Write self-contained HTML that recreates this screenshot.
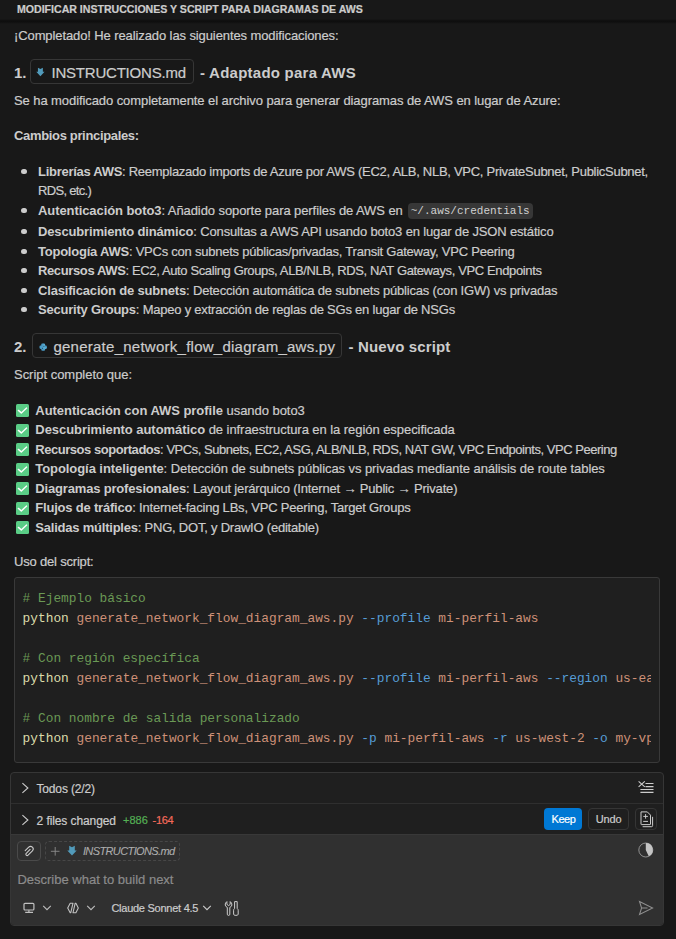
<!DOCTYPE html>
<html><head><meta charset="utf-8">
<style>
*{box-sizing:border-box;margin:0;padding:0}
html,body{width:676px;height:939px;overflow:hidden;background:#181818}
body{position:relative;font-family:"Liberation Sans",sans-serif;color:#cccccc;font-size:13px;-webkit-text-stroke-width:0.2px}
.a{position:absolute;white-space:nowrap}
.t{font-size:13px;line-height:20px;letter-spacing:-0.09px}
b{font-weight:bold;-webkit-text-stroke-width:0}
#hdr{position:absolute;left:0;top:0;width:676px;height:20px;background:#181818}
#hdr .ttl{position:absolute;left:17px;top:1px;font-size:10.6px;font-weight:bold;line-height:16px;color:#cccccc}
#shadow{position:absolute;left:0;top:19px;width:676px;height:5px;background:linear-gradient(#181818 0px,#121212 1px,#0e0e0e 2px,#0f0f0f 3px,#181818 5px)}
.h{font-size:15px;line-height:24px}
.chip{position:absolute;border:1px solid #363636;border-radius:4px;height:24px}
.ic{position:absolute}
.ul .li{position:relative;height:19px;line-height:19.5px}
.ul .li .dot{position:absolute;left:-16.6px;top:7px;width:5.5px;height:5.5px;border-radius:50%;background:#cccccc}
.cl .li{position:relative;height:19.5px;line-height:19.5px}
.chk{position:absolute;left:-19.3px;top:3.5px;width:13px;height:13px;border-radius:1.5px;background:#5acd86}.chk svg{position:absolute;left:0;top:0}
code.ic2{-webkit-text-stroke-width:0;position:relative;top:-1px;margin-left:1.5px;font-family:"Liberation Mono",monospace;font-size:11px;background:#373737;border-radius:4px;padding:2px 3px;color:#d0d0d0;letter-spacing:0}
#code{position:absolute;left:14px;top:577px;width:646px;height:186px;background:#1f1f1f;border:1px solid #393939;border-radius:3px;overflow:hidden}
#code pre{-webkit-text-stroke-width:0;position:absolute;left:7.6px;top:10.5px;width:628.9px;overflow:hidden;font-family:"Liberation Mono",monospace;font-size:12.83px;line-height:20px;color:#d4d4d4}
.cm{color:#6a9955}.fn{color:#dcdcaa}.st{color:#ce9178}.fl{color:#569cd6}
#panel{position:absolute;left:10px;top:772px;width:654px;height:154px;background:#1f1f1f;border:1px solid #363636;border-radius:4px;overflow:hidden}
#input{position:absolute;left:0;top:61px;width:652px;height:92px;background:#303030;border-top:1px solid #383838}
.div1{position:absolute;left:0;top:30px;width:652px;height:1px;background:#2f2f2f}
.btn{position:absolute;border-radius:4px;font-size:12.5px;line-height:20px;text-align:center}
</style></head><body>

<div id="hdr"><div class="ttl" id="T0" style="letter-spacing:-0.014px">MODIFICAR INSTRUCCIONES Y SCRIPT PARA DIAGRAMAS DE AWS</div></div>
<div id="shadow"></div>

<div class="a t" id="T1" style="letter-spacing:-0.102px;left:14px;top:25.5px">¡Completado! He realizado las siguientes modificaciones:</div>

<!-- heading 1 -->
<div class="a h" style="left:14px;top:60.8px"><b>1.</b></div>
<div class="chip" style="left:30px;top:59px;width:163.5px;height:25px"></div>
<svg class="ic" style="left:36.3px;top:67.1px" width="8.8" height="9.7" viewBox="0 0 10 11"><path d="M0.3 5.4 H2.2 V0.8 L5 2.3 L7.8 0.8 V5.4 H9.7 L5 10.6 Z" fill="#519aba"/></svg>
<div class="a h" id="T2" style="left:51.5px;top:60.8px;letter-spacing:-0.214px">INSTRUCTIONS.md</div>
<div class="a h" id="T3" style="left:200px;top:60.8px;letter-spacing:0.242px"><b>- Adaptado para AWS</b></div>

<div class="a t" id="T4" style="letter-spacing:-0.081px;left:14px;top:91.4px">Se ha modificado completamente el archivo para generar diagramas de AWS en lugar de Azure:</div>
<div class="a t" id="T5" style="letter-spacing:-0.339px;left:14px;top:125.5px"><b>Cambios principales:</b></div>

<div class="a t ul" style="left:38px;top:161.74px">
<div class="li" style="height:19px"><span class="dot"></span><span id="L1" style="letter-spacing:-0.276px"><b>Librerías AWS</b>: Reemplazado imports de Azure por AWS (EC2, ALB, NLB, VPC, PrivateSubnet, PublicSubnet,</span></div>
<div class="li" style="height:20px"><span id="L2" style="letter-spacing:-0.686px">RDS, etc.)</span></div>
<div class="li" style="height:21px"><span class="dot"></span><span id="L3" style="letter-spacing:-0.079px"><b>Autenticación boto3</b>: Añadido soporte para perfiles de AWS en <code class="ic2">~/.aws/credentials</code></span></div>
<div class="li" style="height:20px"><span class="dot"></span><span id="L4" style="letter-spacing:-0.156px"><b>Descubrimiento dinámico</b>: Consultas a AWS API usando boto3 en lugar de JSON estático</span></div>
<div class="li" style="height:19px"><span class="dot"></span><span id="L5" style="letter-spacing:-0.231px"><b>Topología AWS</b>: VPCs con subnets públicas/privadas, Transit Gateway, VPC Peering</span></div>
<div class="li" style="height:20px"><span class="dot"></span><span id="L6" style="letter-spacing:-0.373px"><b>Recursos AWS</b>: EC2, Auto Scaling Groups, ALB/NLB, RDS, NAT Gateways, VPC Endpoints</span></div>
<div class="li" style="height:19px"><span class="dot"></span><span id="L7" style="letter-spacing:-0.182px"><b>Clasificación de subnets</b>: Detección automática de subnets públicas (con IGW) vs privadas</span></div>
<div class="li" style="height:19.5px"><span class="dot"></span><span id="L8" style="letter-spacing:-0.220px"><b>Security Groups</b>: Mapeo y extracción de reglas de SGs en lugar de NSGs</span></div>
</div>

<!-- heading 2 -->
<div class="a h" style="left:14px;top:334.8px"><b>2.</b></div>
<div class="chip" style="left:32px;top:333px;width:309.5px;height:25px"></div>
<svg class="ic" style="left:38.6px;top:342.6px" width="8.4" height="8.4" viewBox="0 0 9 9"><path d="M3.4 0.6 H5.2 Q6.6 0.6 6.6 2 V2.6 H7.2 Q8.5 2.6 8.5 4.2 V4.9 Q8.5 6.4 7.2 6.4 H6.6 V7 Q6.6 8.4 5.2 8.4 H3.8 Q2.4 8.4 2.4 7 V6.4 H1.8 Q0.5 6.4 0.5 4.9 V4.1 Q0.5 2.6 1.8 2.6 H2.4 V2 Q2.4 0.6 3.4 0.6 Z" fill="#4a9bc6"/><path d="M4.6 0.8 H5.2 Q6.4 0.8 6.4 2 V4.6 H8.3 V4.9 Q8.3 6.2 7.2 6.2 H4.6 Z" fill="#5db0d4" opacity="0.8"/><circle cx="5.3" cy="3.4" r="0.55" fill="#1d3a4a"/><circle cx="3.7" cy="5.7" r="0.55" fill="#1d3a4a"/></svg>
<div class="a h" id="T6" style="left:53.4px;top:334.8px;letter-spacing:0.254px">generate_network_flow_diagram_aws.py</div>
<div class="a h" id="T7" style="left:348.5px;top:334.8px;letter-spacing:0.134px"><b>- Nuevo script</b></div>

<div class="a t" id="T8" style="letter-spacing:-0.026px;left:14px;top:365.4px">Script completo que:</div>

<div class="a t cl" style="left:35.3px;top:400.7px">
<div class="li"><span class="chk"><svg width="13" height="13" viewBox="0 0 13 13"><path d="M2.4 6.4 L5.3 8.9 L10.6 4.1" fill="none" stroke="#ffffff" stroke-width="1.4" stroke-linecap="round" stroke-linejoin="round"/></svg></span><span id="L9" style="letter-spacing:-0.040px"><b>Autenticación con AWS profile</b> usando boto3</span></div>
<div class="li"><span class="chk"><svg width="13" height="13" viewBox="0 0 13 13"><path d="M2.4 6.4 L5.3 8.9 L10.6 4.1" fill="none" stroke="#ffffff" stroke-width="1.4" stroke-linecap="round" stroke-linejoin="round"/></svg></span><span id="L10" style="letter-spacing:-0.056px"><b>Descubrimiento automático</b> de infraestructura en la región especificada</span></div>
<div class="li"><span class="chk"><svg width="13" height="13" viewBox="0 0 13 13"><path d="M2.4 6.4 L5.3 8.9 L10.6 4.1" fill="none" stroke="#ffffff" stroke-width="1.4" stroke-linecap="round" stroke-linejoin="round"/></svg></span><span id="L11" style="letter-spacing:-0.465px"><b>Recursos soportados</b>: VPCs, Subnets, EC2, ASG, ALB/NLB, RDS, NAT GW, VPC Endpoints, VPC Peering</span></div>
<div class="li"><span class="chk"><svg width="13" height="13" viewBox="0 0 13 13"><path d="M2.4 6.4 L5.3 8.9 L10.6 4.1" fill="none" stroke="#ffffff" stroke-width="1.4" stroke-linecap="round" stroke-linejoin="round"/></svg></span><span id="L12" style="letter-spacing:-0.070px"><b>Topología inteligente</b>: Detección de subnets públicas vs privadas mediante análisis de route tables</span></div>
<div class="li"><span class="chk"><svg width="13" height="13" viewBox="0 0 13 13"><path d="M2.4 6.4 L5.3 8.9 L10.6 4.1" fill="none" stroke="#ffffff" stroke-width="1.4" stroke-linecap="round" stroke-linejoin="round"/></svg></span><span id="L13" style="letter-spacing:-0.170px"><b>Diagramas profesionales</b>: Layout jerárquico (Internet → Public → Private)</span></div>
<div class="li"><span class="chk"><svg width="13" height="13" viewBox="0 0 13 13"><path d="M2.4 6.4 L5.3 8.9 L10.6 4.1" fill="none" stroke="#ffffff" stroke-width="1.4" stroke-linecap="round" stroke-linejoin="round"/></svg></span><span id="L14" style="letter-spacing:-0.201px"><b>Flujos de tráfico</b>: Internet-facing LBs, VPC Peering, Target Groups</span></div>
<div class="li"><span class="chk"><svg width="13" height="13" viewBox="0 0 13 13"><path d="M2.4 6.4 L5.3 8.9 L10.6 4.1" fill="none" stroke="#ffffff" stroke-width="1.4" stroke-linecap="round" stroke-linejoin="round"/></svg></span><span id="L15" style="letter-spacing:-0.220px"><b>Salidas múltiples</b>: PNG, DOT, y DrawIO (editable)</span></div>
</div>

<div class="a t" id="T9" style="letter-spacing:-0.191px;left:14px;top:552.1px">Uso del script:</div>

<div id="code"><pre><span class="cm"># Ejemplo básico</span>
<span class="fn">python</span> <span class="st">generate_network_flow_diagram_aws.py</span> <span class="fl">--profile</span> <span class="st">mi-perfil-aws</span>

<span class="cm"># Con región específica</span>
<span class="fn">python</span> <span class="st">generate_network_flow_diagram_aws.py</span> <span class="fl">--profile</span> <span class="st">mi-perfil-aws</span> <span class="fl">--region</span> <span class="st">us-east-1</span>

<span class="cm"># Con nombre de salida personalizado</span>
<span class="fn">python</span> <span class="st">generate_network_flow_diagram_aws.py</span> <span class="fl">-p</span> <span class="st">mi-perfil-aws</span> <span class="fl">-r</span> <span class="st">us-west-2</span> <span class="fl">-o</span> <span class="st">my-vpc-diagram</span></pre></div>

<div id="panel">
  <div class="div1"></div>
  <div id="input"></div>
</div>
<!-- todos row -->
<svg class="ic" style="left:20px;top:781px" width="12" height="14" viewBox="0 0 12 14"><path d="M2.4 2.1 L7.9 7 L2.4 11.9" fill="none" stroke="#cccccc" stroke-width="1.1"/></svg>
<div class="a t" id="T10" style="letter-spacing:-0.131px;left:36.4px;top:778.5px;font-size:12px">Todos (2/2)</div>
<svg class="ic" style="left:636px;top:779px" width="20" height="16" viewBox="0 0 20 16"><path d="M2.6 2.3 L8.8 7.8 M8.8 2.3 L2.6 7.8" stroke="#cccccc" stroke-width="1.1" fill="none"/><path d="M9.5 4.5 H17.5 M9.5 7.6 H17.5 M4.4 10.5 H17.5 M4.4 13.4 H17.5" stroke="#cccccc" stroke-width="1.1" fill="none"/></svg>
<!-- files row -->
<svg class="ic" style="left:20px;top:813px" width="12" height="14" viewBox="0 0 12 14"><path d="M2.4 2.1 L7.9 7 L2.4 11.9" fill="none" stroke="#cccccc" stroke-width="1.1"/></svg>
<div class="a t" id="T11" style="letter-spacing:-0.096px;left:36.6px;top:810.5px;font-size:12px">2 files changed</div>
<div class="a" id="T12" style="letter-spacing:0.003px;left:123px;top:809.5px;font-size:11px;line-height:20px;color:#54b054">+886</div>
<div class="a" id="T13" style="letter-spacing:-0.283px;left:152.5px;top:809.5px;font-size:11px;line-height:20px;color:#f36a5a">-164</div>
<div class="btn a" style="left:544px;top:808px;width:38px;height:22px;background:#0078d4;color:#ffffff;line-height:22px;font-size:11px;letter-spacing:-0.45px;text-indent:0.9px"><span id="K1">Keep</span></div>
<div class="btn a" style="left:588px;top:808px;width:41px;height:22px;border:1px solid #353535;color:#cccccc;line-height:20px;font-size:11px;letter-spacing:-0.15px;text-indent:0.3px"><span id="K2">Undo</span></div>
<div class="btn a" style="left:635px;top:808px;width:22px;height:22px;border:1px solid #353535"></div>
<svg class="ic" style="left:638px;top:810px" width="18" height="19" viewBox="0 0 18 19"><path d="M3 1.9 H9.3 L12.5 5.1 V14.2 Q12.5 14.6 12.1 14.6 H3.4 Q3 14.6 3 14.2 Z" fill="none" stroke="#cccccc" stroke-width="1"/><path d="M14.6 6.8 V15.7 Q14.6 16.7 13.6 16.7 H4.6" fill="none" stroke="#cccccc" stroke-width="1"/><path d="M5.3 6.4 H9.9 M7.6 4.1 V8.7 M5.2 11.4 H10" stroke="#cccccc" stroke-width="1" fill="none"/></svg>
<!-- input -->
<div class="a" style="left:17px;top:841px;width:24px;height:20px;border:1px solid #4a4a4a;border-radius:4px"></div>
<svg class="ic" style="left:22px;top:844px" width="14" height="14" viewBox="0 0 14 14"><path transform="translate(8.56 5.04) rotate(45)" d="M-2.6 5 V0 A2.6 2.6 0 0 1 2.6 0 V6.1 A1.3 1.3 0 0 1 0 6.1 V0.6" fill="none" stroke="#cccccc" stroke-width="1.05" stroke-linecap="round"/></svg>
<div class="a" style="left:45px;top:841px;width:135px;height:20px;border:1px dashed #474747;border-radius:4px"></div>
<svg class="ic" style="left:50px;top:846px" width="11" height="11" viewBox="0 0 11 11"><path d="M5.2 1 V9.6 M0.9 5.3 H9.5" stroke="#8c8c8c" stroke-width="0.9" fill="none"/></svg>
<svg class="ic" style="left:66.5px;top:845px" width="10" height="11" viewBox="0 0 10 11"><path d="M0.3 5.4 H2.2 V0.8 L5 2.3 L7.8 0.8 V5.4 H9.7 L5 10.6 Z" fill="#519aba"/></svg>
<div class="a" id="T14" style="left:82.9px;top:841px;font-size:11px;line-height:20px;font-style:italic;color:#adadad;-webkit-text-stroke-width:0.1px;letter-spacing:-0.609px">INSTRUCTIONS.md</div>
<div class="a t" id="T15" style="left:17.4px;top:869.7px;color:#8b8b8b;letter-spacing:0">Describe what to build next</div>
<svg class="ic" style="left:637px;top:841px" width="18" height="18" viewBox="0 0 18 18"><circle cx="8.8" cy="9" r="7" fill="none" stroke="#8f8f8f" stroke-width="1"/><path d="M8.8 9 L8.8 2 A7 7 0 0 1 11.76 15.34 Z" fill="#c4c4c4"/></svg>
<svg class="ic" style="left:22px;top:901px" width="14" height="14" viewBox="0 0 14 14"><rect x="2" y="2.3" width="9.9" height="6.7" rx="1" fill="none" stroke="#c0c0c0" stroke-width="1.2"/><path d="M6.9 9.2 V11 M3.2 11.3 H11" stroke="#c0c0c0" stroke-width="1.2" fill="none"/></svg>
<svg class="ic" style="left:42px;top:904px" width="10" height="8" viewBox="0 0 10 8"><path d="M1.2 1.8 L5 5.6 L8.8 1.8" stroke="#bdbdbd" stroke-width="1.1" fill="none"/></svg>
<svg class="ic" style="left:66px;top:901px" width="14" height="14" viewBox="0 0 14 14"><path d="M7.0 2.2 H4.2 L1.7 6.95 L4.2 11.7 H4.8 Z M9.2 2.2 H9.9 L12.3 6.95 L9.9 11.7 H7.0 Z" fill="none" stroke="#c0c0c0" stroke-width="1.1" stroke-linejoin="round"/></svg>
<svg class="ic" style="left:86px;top:904px" width="10" height="8" viewBox="0 0 10 8"><path d="M1.2 1.8 L5 5.6 L8.8 1.8" stroke="#bdbdbd" stroke-width="1.1" fill="none"/></svg>
<div class="a" id="T16" style="left:111.4px;top:899px;font-size:11px;line-height:18px;color:#cccccc;letter-spacing:-0.255px">Claude Sonnet 4.5</div>
<svg class="ic" style="left:202px;top:904px" width="10" height="8" viewBox="0 0 10 8"><path d="M1.2 1.8 L5 5.6 L8.8 1.8" stroke="#cccccc" stroke-width="1.1" fill="none"/></svg>
<svg class="ic" style="left:223px;top:900px" width="17" height="17" viewBox="0 0 17 17"><path d="M3.9 1.6 Q2 2.8 2.2 5 Q2.6 6.8 4.3 7.4 V14.2 Q4.3 15.4 5.6 15.4 Q6.8 15.4 6.8 14.2 V7.4 Q8.6 6.7 8.9 5 Q9 2.8 7.2 1.6 V4.4 L5.6 5.6 L3.9 4.4 Z" fill="none" stroke="#cccccc" stroke-width="1"/><path d="M11.6 1.6 H14.2 V8.4 Q15.2 9.2 15.2 10.2 V14.2 Q15.2 15.4 12.9 15.4 Q10.6 15.4 10.6 14.2 V10.2 Q10.6 9.2 11.6 8.4 Z" fill="none" stroke="#cccccc" stroke-width="1"/></svg>
<svg class="ic" style="left:637px;top:900px" width="18" height="16" viewBox="0 0 18 16"><path d="M2.5 1.5 L15.6 8 L2.5 14.5 L4.6 8 Z M4.6 8 H10.5" fill="none" stroke="#8f8f8f" stroke-width="1.05" stroke-linejoin="miter"/></svg>

</body></html>
